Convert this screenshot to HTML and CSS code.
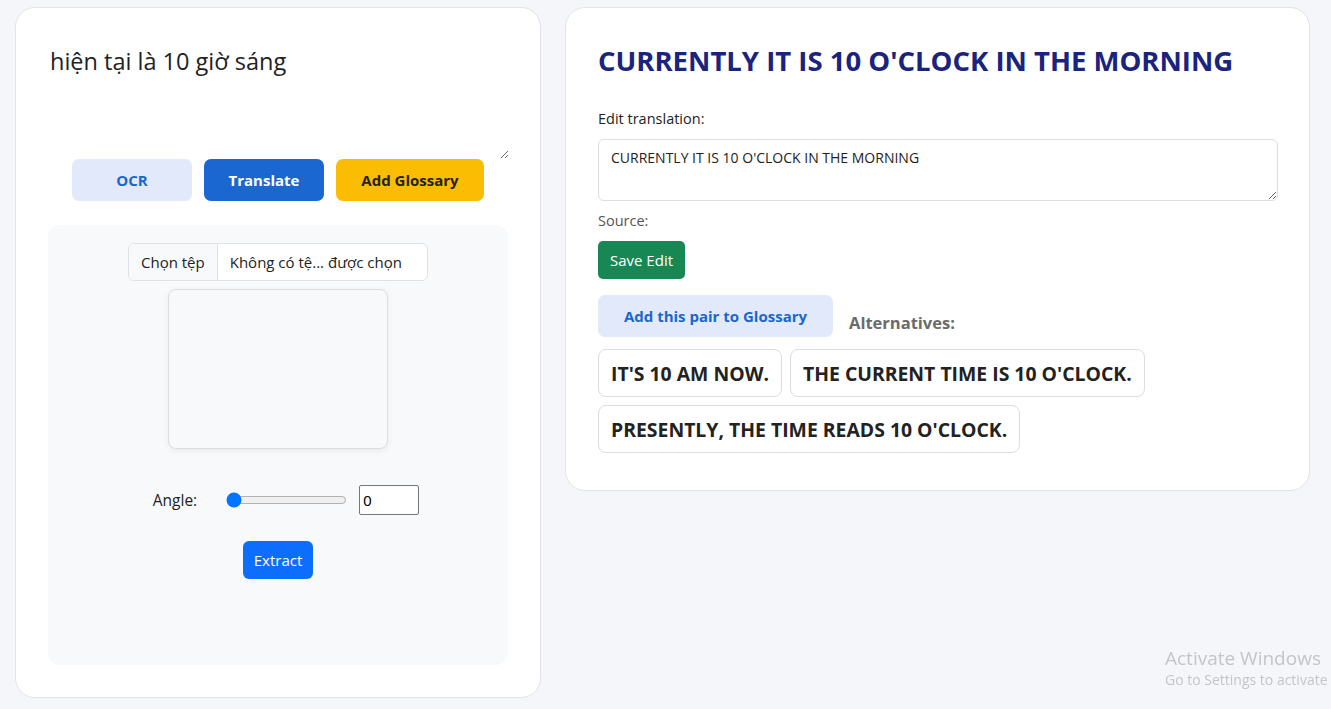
FILE: index.html
```html
<!DOCTYPE html>
<html lang="vi">
<head>
<meta charset="utf-8">
<title>Translator</title>
<link rel="stylesheet" href="styles.css">
</head>
<body>
<main class="layout">
  <section class="card card-left">
    <textarea class="source-input" spellcheck="false">hiện tại là 10 giờ sáng</textarea>
    <div class="actions">
      <button class="btn btn-ocr">OCR</button>
      <button class="btn btn-translate">Translate</button>
      <button class="btn btn-glossary">Add Glossary</button>
    </div>
    <div class="ocr-panel">
      <div class="file-input">
        <span class="file-btn">Chọn tệp</span>
        <span class="file-name">Không có tệ... được chọn</span>
      </div>
      <div class="preview"></div>
      <div class="angle-row">
        <label class="angle-label">Angle:</label>
        <input class="angle-range" type="range" min="0" max="360" value="0">
        <input class="angle-num" type="text" value="0">
      </div>
      <button class="btn-extract">Extract</button>
    </div>
  </section>

  <section class="card card-right">
    <h2 class="result-title">CURRENTLY IT IS 10 O'CLOCK IN THE MORNING</h2>
    <div class="field-label">Edit translation:</div>
    <textarea class="edit-input" spellcheck="false">CURRENTLY IT IS 10 O'CLOCK IN THE MORNING</textarea>
    <div class="source-label">Source:</div>
    <button class="btn-save">Save Edit</button>
    <div class="pair-row">
      <button class="btn-pair">Add this pair to Glossary</button>
      <span class="alt-label">Alternatives:</span>
    </div>
    <div class="alts">
      <button class="alt-chip">IT'S 10 AM NOW.</button>
      <button class="alt-chip">THE CURRENT TIME IS 10 O'CLOCK.</button>
      <button class="alt-chip">PRESENTLY, THE TIME READS 10 O'CLOCK.</button>
    </div>
  </section>
</main>
<div class="watermark">
  <div class="wm-title">Activate Windows</div>
  <div class="wm-sub">Go to Settings to activate Windows.</div>
</div>
</body>
</html>
```

FILE: styles.css
```css
html, body {
  margin: 0;
  padding: 0;
  overflow: hidden;
}
body {
  background: #f5f6fa;
  font-family: "Open Sans", "Noto Sans", sans-serif;
  color: #222;
  height: 709px;
}
.layout {
  display: flex;
  align-items: flex-start;
  gap: 24px;
  padding: 7px 0 0 15px;
}
.card {
  background: #fff;
  border: 1px solid #e2e3e6;
  border-radius: 20px;
  box-sizing: border-box;
  padding: 32px 32px;
}
.card-left {
  width: 526px;
  height: 691px;
  display: flex;
  flex-direction: column;
}
.source-input {
  display: block;
  width: 461px;
  height: 119px;
  border: none;
  outline: none;
  padding: 1px 2px;
  margin: 0;
  box-sizing: border-box;
  font-family: inherit;
  font-size: 23.5px;
  line-height: 40px;
  color: #222;
  resize: vertical;
  background: transparent;
}
.actions {
  display: flex;
  justify-content: center;
  gap: 12px;
  margin-top: 0;
}
.btn {
  height: 42px;
  border: none;
  border-radius: 7px;
  font-family: inherit;
  font-size: 15px;
  font-weight: 700;
  padding: 0 16px;
  cursor: pointer;
}
.btn-ocr { width: 120px; background: #e2e9fb; color: #1a66cf; }
.btn-translate { width: 120px; background: #1a67d2; color: #fff; }
.btn-glossary { width: 148px; background: #fbbc04; color: #222; }
.ocr-panel {
  margin-top: 24px;
  height: 440px;
  box-sizing: border-box;
  background: #f8f9fb;
  border-radius: 12px;
  padding-top: 18px;
  display: flex;
  flex-direction: column;
  align-items: center;
}
.file-input {
  display: flex;
  height: 38px;
  width: 300px;
  box-sizing: border-box;
  border: 1px solid #dee2e6;
  border-radius: 6px;
  overflow: hidden;
  font-size: 15px;
  background: #fff;
}
.file-btn {
  display: flex;
  align-items: center;
  padding: 0 12px;
  background: #f8f9fa;
  border-right: 1px solid #dee2e6;
  color: #222;
}
.file-name {
  display: flex;
  align-items: center;
  padding: 0 12px;
  color: #222;
}
.preview {
  margin-top: 8px;
  width: 220px;
  height: 160px;
  box-sizing: border-box;
  border: 1px solid #dcdde0;
  border-radius: 8px;
  background: #f8f9fb;
  box-shadow: 0 2px 6px rgba(0,0,0,0.06);
}
.angle-row {
  display: flex;
  align-items: center;
  margin-top: 36px;
  height: 30px;
  padding-left: 16px;
}
.angle-label {
  font-size: 15.5px;
  color: #222;
  margin-right: 29px;
}
.angle-range {
  width: 121px;
  margin: 0 12px 0 0;
}
.angle-num {
  width: 60px;
  height: 30px;
  box-sizing: border-box;
  border: 1px solid #767676;
  border-radius: 2px;
  padding: 0 3px;
  font-family: "Liberation Sans", Arial, sans-serif;
  font-size: 15px;
  color: #000;
  background: #fff;
}
.btn-extract {
  margin-top: 26px;
  height: 38px;
  padding: 0 11px;
  border: none;
  border-radius: 6px;
  background: #0d6efd;
  color: #fff;
  font-family: inherit;
  font-size: 15px;
}
.card-right {
  width: 745px;
  height: 484px;
}
.result-title {
  margin: 3px 0 0;
  font-size: 27.5px;
  font-weight: 700;
  line-height: 36px;
  color: #1a237e;
}
.field-label {
  margin-top: 30px;
  font-size: 14.5px;
  line-height: 20px;
  color: #222;
}
.edit-input {
  display: block;
  margin-top: 10px;
  width: 680px;
  height: 62px;
  box-sizing: border-box;
  border: 1px solid #dcdde0;
  border-radius: 6px;
  padding: 8px 12px;
  font-family: inherit;
  font-size: 14px;
  line-height: 20px;
  color: #222;
  resize: vertical;
  outline: none;
}
.source-label {
  margin-top: 10px;
  font-size: 14.5px;
  line-height: 20px;
  color: #555;
}
.btn-save {
  display: block;
  margin-top: 10px;
  height: 38px;
  padding: 0 12px;
  border: none;
  border-radius: 5px;
  background: #198754;
  color: #fff;
  font-family: inherit;
  font-size: 15px;
}
.pair-row {
  display: flex;
  align-items: flex-end;
  gap: 16px;
  margin-top: 16px;
}
.btn-pair {
  height: 42px;
  width: 235px;
  border: none;
  border-radius: 7px;
  background: #e2e9fb;
  color: #1a66cf;
  font-family: inherit;
  font-size: 15px;
  font-weight: 700;
}
.alt-label {
  font-size: 16.5px;
  font-weight: 700;
  color: #6b6b6b;
  line-height: 20px;
  margin-bottom: 4px;
}
.alts {
  display: flex;
  flex-wrap: wrap;
  gap: 8px 8px;
  margin-top: 12px;
}
.alt-chip {
  height: 48px;
  padding: 0 12px;
  border: 1px solid #dcdde0;
  border-radius: 8px;
  background: #fff;
  color: #222;
  font-family: inherit;
  font-size: 19.4px;
  font-weight: 700;
}
.watermark {
  position: fixed;
  left: 1165px;
  top: 646px;
  white-space: nowrap;
  color: #c4c5c8;
}
.wm-title {
  font-size: 19px;
  line-height: 24px;
}
.wm-sub {
  font-size: 14px;
  line-height: 20px;
}
```
